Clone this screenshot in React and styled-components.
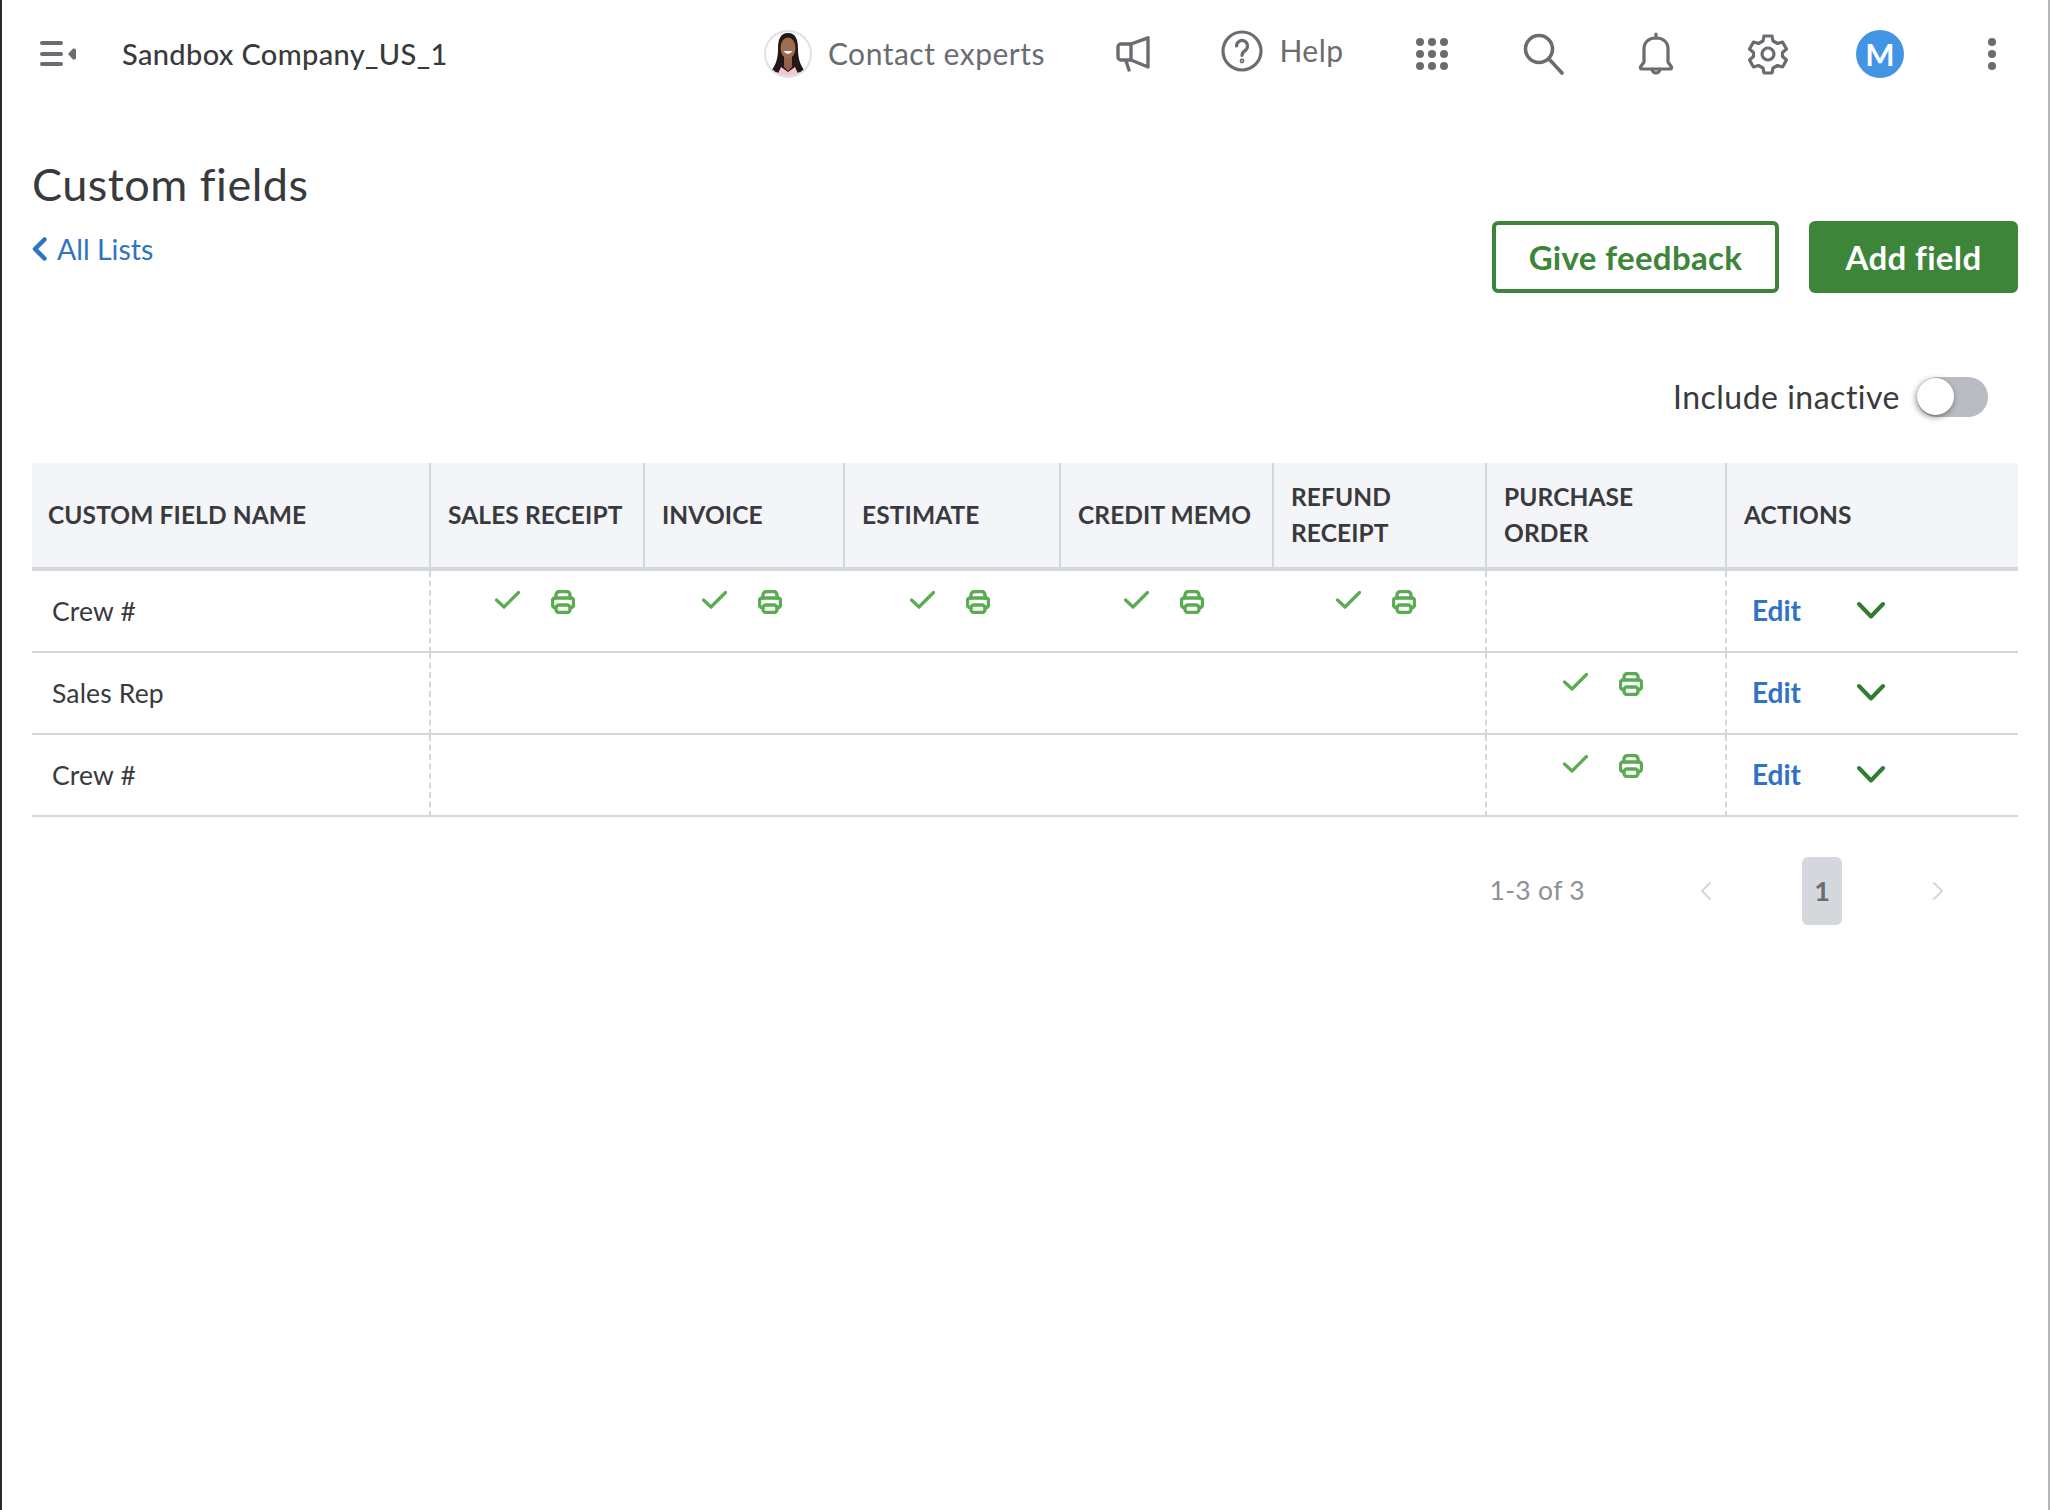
import styled, { createGlobalStyle } from "styled-components";

const GlobalStyle = createGlobalStyle`
  html, body { margin: 0; padding: 0; background: #fff; }
  body { font-family: "Lato", "Open Sans", sans-serif; color: #393a3d; }
`;

const Page = styled.div`
  box-sizing: border-box;
  width: 2050px;
  min-height: 1510px;
  border-left: 2px solid #2b2b2b;
  border-right: 2px solid #b4b6ba;
`;

// top bar
const Topbar = styled.header`
  display: flex;
  align-items: center;
  height: 108px;
  padding-left: 38px;
`;

const MenuIcon = styled.svg`
  width: 36px;
  height: 26px;
  flex: none;
`;

const Company = styled.div`
  margin-left: 46px;
  padding-bottom: 2px;
  font-size: 29px;
  font-weight: 500;
  letter-spacing: 0.35px;
  color: #393a3d;
  white-space: nowrap;
`;

const NavGroup = styled.nav`
  display: flex;
  align-items: center;
  margin-left: auto;
`;

const Slot = styled.div`
  display: flex;
  align-items: center;
  justify-content: center;
  width: ${(p) => p.$w || 112}px;
  height: 108px;
  gap: ${(p) => p.$gap || 0}px;
  position: relative;
  top: ${(p) => p.$up ? -3 : 0}px;
`;

const NavText = styled.span`
  padding-bottom: 2px;
  font-size: 30px;
  letter-spacing: 0.5px;
  color: #6b6c72;
  white-space: nowrap;
`;

const Contact = styled.div`
  display: flex;
  align-items: center;
  gap: 16px;
  margin-right: 32px;
`;

const UserBadge = styled.div`
  width: 48px;
  height: 48px;
  border-radius: 50%;
  background: #4394e3;
  color: #fff;
  font-size: 31px;
  font-weight: 700;
  display: flex;
  align-items: center;
  justify-content: center;
`;

// page head
const Main = styled.main`
  padding: 0 30px;
`;

const HeadRow = styled.div`
  display: flex;
  justify-content: space-between;
  align-items: flex-start;
  padding-top: 48px;
`;

const Title = styled.h1`
  margin: 0;
  font-size: 45px;
  line-height: 56px;
  font-weight: 400;
  letter-spacing: 0.5px;
  color: #393a3d;
`;

const BackLink = styled.a`
  display: flex;
  align-items: center;
  gap: 10px;
  margin-top: 19px;
  font-size: 28.5px;
  line-height: 36px;
  color: #2f73c4;
  text-decoration: none;
`;

const Actions = styled.div`
  display: flex;
  gap: 30px;
  margin-top: 65px;
`;

const Button = styled.button`
  box-sizing: border-box;
  height: 72px;
  width: ${(p) => p.$w}px;
  border-radius: 6px;
  border: 4px solid #3c8539;
  background: ${(p) => (p.$primary ? "#3c8539" : "#fff")};
  color: ${(p) => (p.$primary ? "#fff" : "#3c8539")};
  font-family: inherit;
  font-size: 33px;
  font-weight: 700;
  letter-spacing: 0.35px;
  padding: 0;
`;

const ToggleRow = styled.div`
  display: flex;
  justify-content: flex-end;
  align-items: center;
  gap: 17px;
  margin-top: 84px;
  padding-right: 30px;
  height: 40px;
`;

const ToggleLabel = styled.span`
  padding-bottom: 2px;
  font-size: 32px;
  letter-spacing: 0.5px;
  color: #393a3d;
`;

const Track = styled.div`
  position: relative;
  width: 71px;
  height: 40px;
  border-radius: 20px;
  background: #b9bcc3;
`;

const Knob = styled.div`
  position: absolute;
  left: 0;
  top: 1px;
  width: 37px;
  height: 37px;
  border-radius: 50%;
  background: #fff;
  box-shadow: -1px 2px 6px rgba(0, 0, 0, 0.45);
`;

// table
const Table = styled.table`
  width: 1986px;
  margin-top: 46px;
  border-collapse: separate;
  border-spacing: 0;
  table-layout: fixed;
`;

const Th = styled.th`
  box-sizing: border-box;
  height: 108px;
  padding: 0 8px 0 17px;
  background: #f4f5f8;
  border-bottom: 4px solid #d4d7dc;
  border-right: 2px solid #d4d7dc;
  text-align: left;
  font-size: 24.5px;
  line-height: 36px;
  font-weight: 700;
  letter-spacing: 0.1px;
  color: #393a3d;
  &:first-child { padding-left: 16px; }
  &:last-child { border-right: 0; }
`;

const Td = styled.td`
  box-sizing: border-box;
  height: 82px;
  padding: 19px 0 0;
  vertical-align: top;
  border-bottom: 2px solid #d4d7dc;
  border-right: ${(p) => (p.$dashed ? "2px dashed #d4d7dc" : "0")};
`;

const NameCell = styled.div`
  padding: 3px 0 0 20px;
  font-size: 26.5px;
  line-height: 36px;
  letter-spacing: 0.15px;
  color: #393a3d;
`;

const Flags = styled.div`
  display: flex;
  justify-content: center;
  gap: 31px;
  padding-right: 7px;
`;

const RowActions = styled.div`
  display: flex;
  align-items: center;
  height: 36px;
  margin-top: 2px;
  padding-left: 25px;
`;

const EditLink = styled.a`
  width: 104px;
  font-size: 28px;
  font-weight: 700;
  color: #2f73c4;
  text-decoration: none;
`;

// pagination
const Pager = styled.div`
  display: flex;
  justify-content: flex-end;
  align-items: center;
  gap: 90px;
  margin-top: 40px;
  padding-right: 74px;
`;

const PagerText = styled.span`
  margin-right: 25px;
  padding-bottom: 2px;
  font-size: 26.5px;
  letter-spacing: 0.3px;
  color: #8d9096;
`;

const PageNumber = styled.div`
  box-sizing: border-box;
  width: 40px;
  height: 68px;
  padding-bottom: 2px;
  border-radius: 6px;
  background: #d4d7dc;
  color: #6b6c72;
  font-size: 27px;
  font-weight: 700;
  display: flex;
  align-items: center;
  justify-content: center;
`;

const Ico = styled.svg`
  display: block;
  flex: none;
  fill: none;
  stroke: ${(p) => p.$color || "#6b6c72"};
  stroke-width: ${(p) => p.$sw || 3};
  stroke-linecap: round;
  stroke-linejoin: round;
`;

const Check = () => (
  <Ico width="25" height="18" viewBox="0 0 25 18" $color="#5bab52" $sw="3.2" style={{ marginTop: 1 }}>
    <path d="M1.5 9 L9 16 L23.5 1.5" />
  </Ico>
);

const Printer = () => (
  <Ico width="24" height="24" viewBox="0 0 24 24" $color="#5bab52" $sw="3.4">
    <path d="M5 8 V5 a3.5 3.5 0 0 1 3.5 -3.5 h7 A3.5 3.5 0 0 1 19 5 V8" />
    <path d="M5 17.500 H4 a2.500 2.500 0 0 1 -2.500 -2.500 V10.500 A2.500 2.500 0 0 1 4 8 h16 a2.500 2.500 0 0 1 2.500 2.500 V15 A2.500 2.500 0 0 1 20 17.500 h-1" />
    <rect x="5" y="15" width="14" height="7.500" rx="3" />
  </Ico>
);

const Down = () => (
  <Ico width="30" height="18" viewBox="0 0 30 18" $color="#2e7d32" $sw="4">
    <path d="M3 3 L15 15.5 L27 3" />
  </Ico>
);

const Portrait = () => (
  <svg width="48" height="48" viewBox="0 0 48 48">
    <defs>
      <clipPath id="face-clip">
        <circle cx="24" cy="24" r="22" />
      </clipPath>
    </defs>
    <circle cx="24" cy="24" r="23" fill="#fff" stroke="#dfe1e6" strokeWidth="2" />
    <g clipPath="url(#face-clip)">
      <path d="M24 3 C16 3 14 10 14 19 C14 28 12 35 7 41 L19 44 H29 L41 41 C36 35 34 28 34 19 C34 10 32 3 24 3 Z" fill="#231815" />
      <path d="M20 27 H28 V37 L24 41 L20 37 Z" fill="#94624a" />
      <ellipse cx="24" cy="18" rx="7.500" ry="10.500" fill="#a06c4f" />
      <path d="M19.500 21 Q24 27 28.500 21 Z" fill="#fff" />
      <path d="M12 48 L17 37 L24 42 L31 37 L36 48 Z" fill="#f3c6ce" />
    </g>
  </svg>
);

const columns = [
  ["CUSTOM FIELD NAME", 399],
  ["SALES RECEIPT", 214],
  ["INVOICE", 200],
  ["ESTIMATE", 216],
  ["CREDIT MEMO", 213],
  ["REFUND RECEIPT", 213],
  ["PURCHASE ORDER", 240],
  ["ACTIONS", 291],
];

const rows = [
  { name: "Crew #", flags: [1, 2, 3, 4, 5] },
  { name: "Sales Rep", flags: [6] },
  { name: "Crew #", flags: [6] },
];

export default function App() {
  return (
    <>
      <GlobalStyle />
      <Page>
        <Topbar>
          <MenuIcon viewBox="0 0 36 26">
            <g fill="#6b6c72">
              <rect x="0" y="0" width="23" height="4" rx="2" />
              <rect x="0" y="11" width="23" height="4" rx="2" />
              <rect x="0" y="21" width="23" height="4" rx="2" />
              <path d="M28 13 L33 7.5 Q36 7 36 9 V17 Q36 19 33 18.5 Z" />
            </g>
          </MenuIcon>
          <Company>Sandbox Company_US_1</Company>
          <NavGroup>
            <Contact>
              <Portrait />
              <NavText>Contact experts</NavText>
            </Contact>
            <Slot>
              <Ico width="34" height="36" viewBox="0 0 34 36" $sw="3.4">
                <path d="M15 8 L32 1.8 V31 L15 24 Z" />
                <path d="M15 8 H5 a3 3 0 0 0 -3 3 V21 a3 3 0 0 0 3 3 H15" />
                <path d="M10 25 L13 34" />
              </Ico>
            </Slot>
            <Slot $w={187} $gap={16} $up>
              <Ico width="42" height="42" viewBox="0 0 42 42" $sw="3.2">
                <circle cx="21" cy="21" r="19" />
                <path d="M15.500 16 a5.500 5.500 0 1 1 8.500 4.600 c-2 1.300 -3 2.400 -3 4.900" />
                <circle cx="21" cy="31" r="0.8" />
              </Ico>
              <NavText>Help</NavText>
            </Slot>
            <Slot>
              <svg width="32" height="32" viewBox="0 0 32 32" fill="#6b6c72">
                {[4, 16, 28].flatMap((y) =>
                  [4, 16, 28].map((x) => <circle key={x + "-" + y} cx={x} cy={y} r="4" />)
                )}
              </svg>
            </Slot>
            <Slot>
              <Ico width="42" height="42" viewBox="0 0 42 42" $sw="3.6">
                <circle cx="16" cy="16" r="13.500" />
                <path d="M26 26 L39 40" />
              </Ico>
            </Slot>
            <Slot>
              <Ico width="36" height="44" viewBox="0 0 36 44" $sw="3.2">
                <path d="M18 2 V6" />
                <path d="M6 30 V17 C6 10 11 6 18 6 C25 6 30 10 30 17 V30 L33.500 35 Q34 37 32 37 H4 Q2 37 2.500 35 Z" />
                <path d="M14 37 a4 4 0 0 0 8 0" />
              </Ico>
            </Slot>
            <Slot>
              <Ico width="40" height="42" viewBox="0 0 40 42" $sw="3.2">
                <circle cx="20" cy="21" r="6" />
                <path d="M16 3 h8 l1 5 l4.500 2.500 l5 -1.500 l4 7 l-4 3.500 v4 l4 3.500 l-4 7 l-5 -1.500 l-4.500 2.500 l-1 5 h-8 l-1 -5 l-4.500 -2.500 l-5 1.500 l-4 -7 l4 -3.500 v-4 l-4 -3.500 l4 -7 l5 1.500 l4.500 -2.500 Z" />
              </Ico>
            </Slot>
            <Slot>
              <UserBadge>M</UserBadge>
            </Slot>
            <Slot>
              <svg width="8" height="32" viewBox="0 0 8 32" fill="#6b6c72">
                <circle cx="4" cy="4" r="4" />
                <circle cx="4" cy="16" r="4" />
                <circle cx="4" cy="28" r="4" />
              </svg>
            </Slot>
          </NavGroup>
        </Topbar>

        <Main>
          <HeadRow>
            <div>
              <Title>Custom fields</Title>
              <BackLink href="#">
                <Ico width="15" height="24" viewBox="0 0 15 24" $color="#2f73c4" $sw="4.500">
                  <path d="M12.500 2.500 L3 12 L12.500 21.500" />
                </Ico>
                All Lists
              </BackLink>
            </div>
            <Actions>
              <Button $w={287}>Give feedback</Button>
              <Button $w={209} $primary>Add field</Button>
            </Actions>
          </HeadRow>

          <ToggleRow>
            <ToggleLabel>Include inactive</ToggleLabel>
            <Track>
              <Knob />
            </Track>
          </ToggleRow>

          <Table>
            <colgroup>
              {columns.map(([label, w]) => (
                <col key={label} width={w} />
              ))}
            </colgroup>
            <thead>
              <tr>
                {columns.map(([label]) => (
                  <Th key={label}>{label}</Th>
                ))}
              </tr>
            </thead>
            <tbody>
              {rows.map((row, i) => (
                <tr key={i}>
                  <Td $dashed>
                    <NameCell>{row.name}</NameCell>
                  </Td>
                  {[1, 2, 3, 4, 5, 6].map((c) => (
                    <Td key={c} $dashed={c === 5 || c === 6}>
                      {row.flags.includes(c) && (
                        <Flags>
                          <Check />
                          <Printer />
                        </Flags>
                      )}
                    </Td>
                  ))}
                  <Td>
                    <RowActions>
                      <EditLink href="#">Edit</EditLink>
                      <Down />
                    </RowActions>
                  </Td>
                </tr>
              ))}
            </tbody>
          </Table>

          <Pager>
            <PagerText>1-3 of 3</PagerText>
            <Ico width="12" height="20" viewBox="0 0 12 20" $color="#d4d7dc" $sw="2">
              <path d="M10 2 L2 10 L10 18" />
            </Ico>
            <PageNumber>1</PageNumber>
            <Ico width="12" height="20" viewBox="0 0 12 20" $color="#d4d7dc" $sw="2">
              <path d="M2 2 L10 10 L2 18" />
            </Ico>
          </Pager>
        </Main>
      </Page>
    </>
  );
}
